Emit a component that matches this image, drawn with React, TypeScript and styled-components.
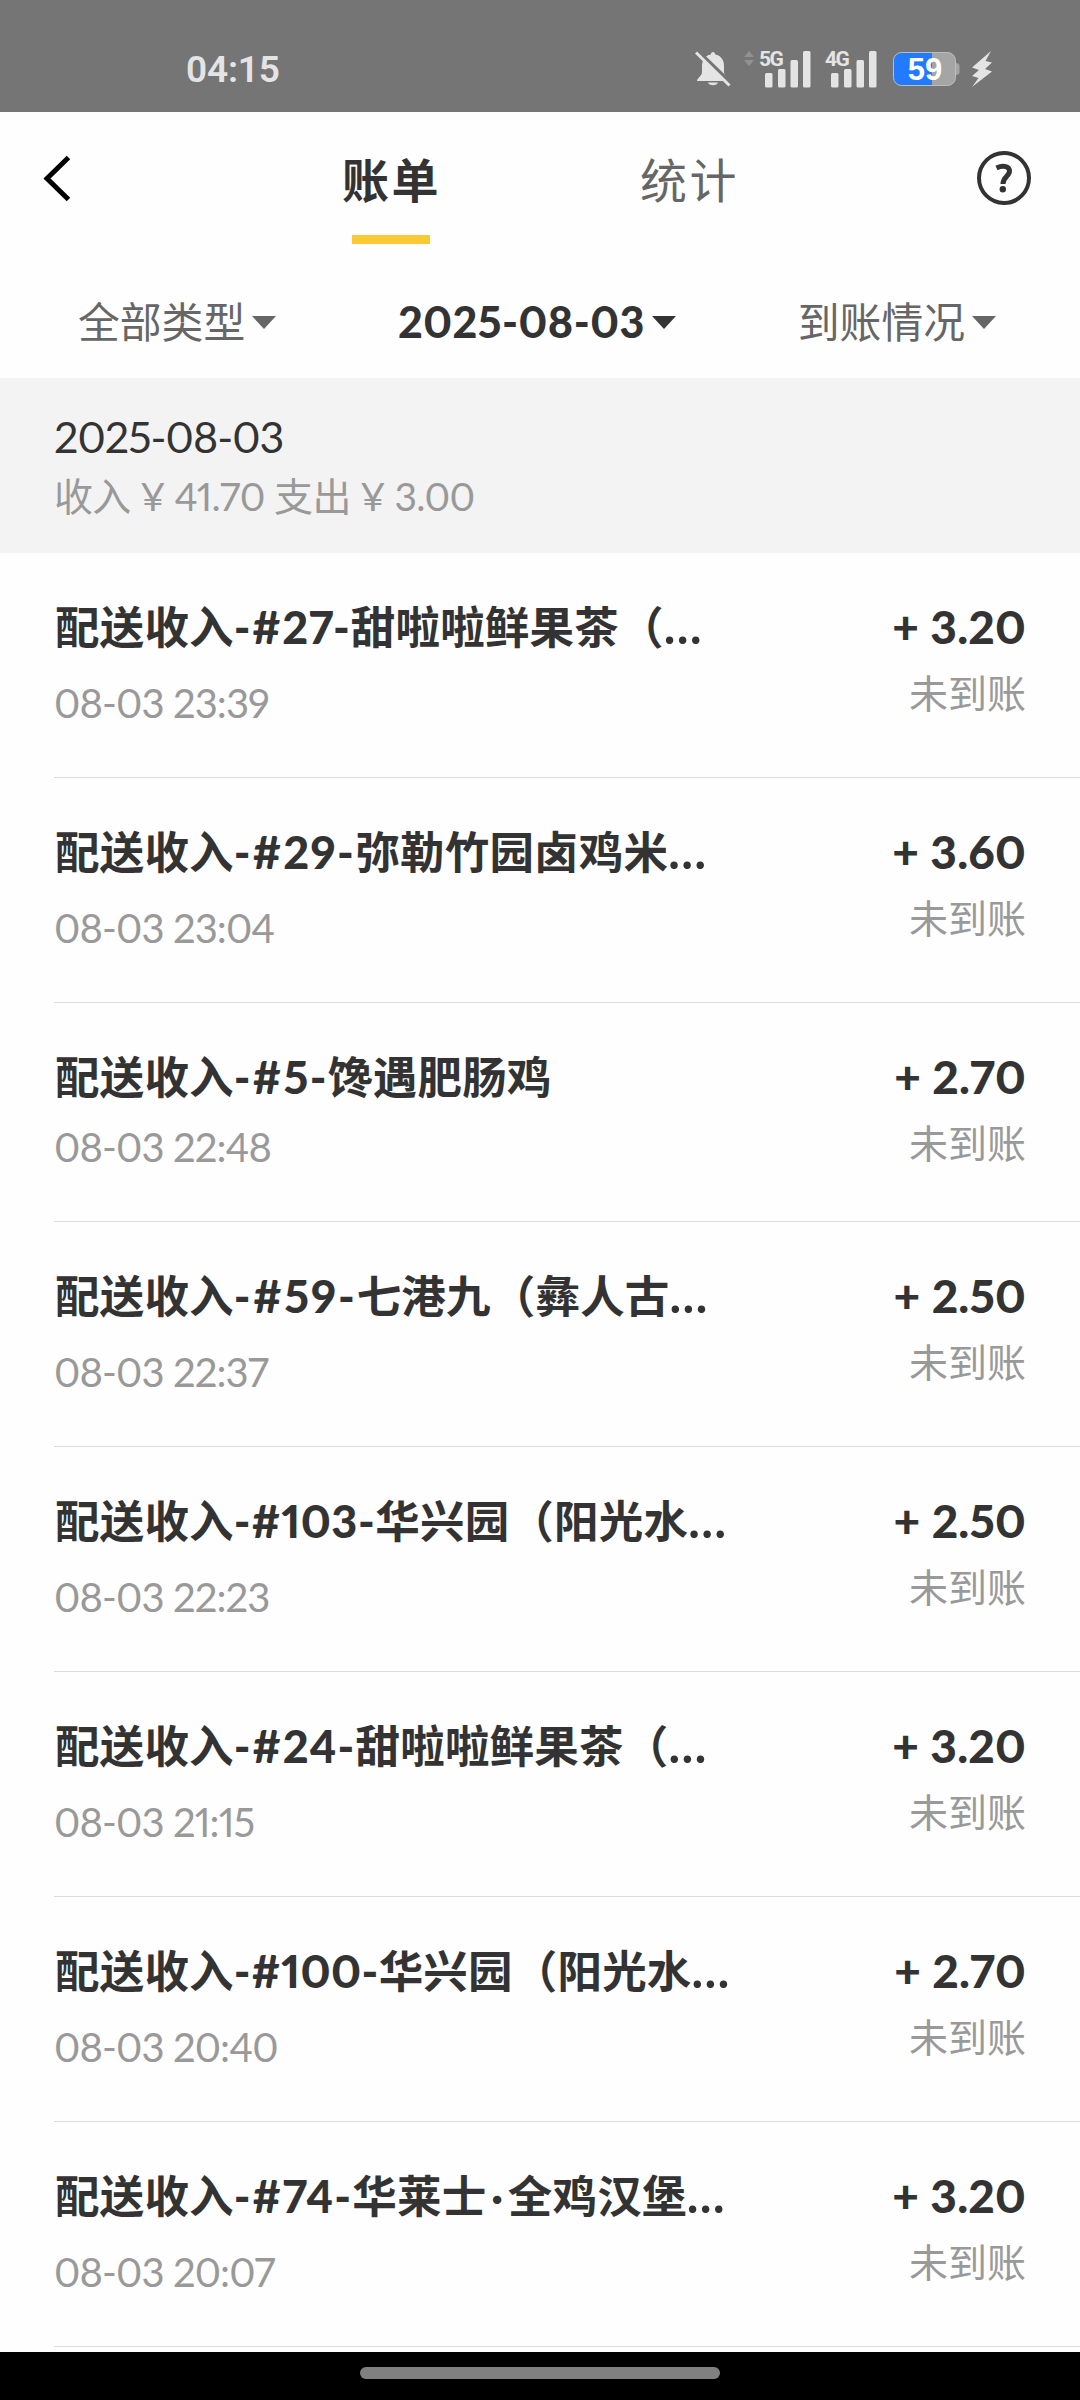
import React from "react";
import styled, { createGlobalStyle } from "styled-components";

const GlobalStyle = createGlobalStyle`
  * { box-sizing: border-box; }
  body { margin: 0; background: #fff; }
`;

const Screen = styled.div`
  width: 1080px;
  height: 2400px;
  display: flex;
  flex-direction: column;
  overflow: hidden;
  background: #fefefe;
  color: #333;
  font-family: Lato, "Noto Sans CJK SC", sans-serif;
  font-feature-settings: "pnum";
  white-space: pre;
`;

const StatusBar = styled.header`
  flex: none;
  height: 112px;
  padding: 26px 87px 0 186px;
  display: flex;
  justify-content: space-between;
  align-items: center;
  background: #757575;
  color: #e4e4e4;
`;

const Clock = styled.span`
  padding-top: 2px;
  font: 600 37px/48px Roboto, sans-serif;
  letter-spacing: -0.2px;
`;

const StatusIcons = styled.div`
  display: flex;
  align-items: center;
  height: 38px;
`;

const Icon = styled.svg<{ $left?: number }>`
  display: block;
  flex: none;
  margin-left: ${(p) => p.$left ?? 0}px;
`;

const SignalBox = styled.div<{ $left: number }>`
  position: relative;
  width: 52px;
  height: 38px;
  margin-left: ${(p) => p.$left}px;
`;

const Network = styled.span`
  position: absolute;
  left: 0;
  top: -1px;
  font: 700 21px/20px Roboto, sans-serif;
  letter-spacing: -1.5px;
`;

const Battery = styled.div`
  position: relative;
  width: 67px;
  height: 34px;
  margin-left: 16px;
`;

const BatteryLevel = styled.span`
  position: absolute;
  left: 0;
  top: 0;
  width: 64px;
  text-align: center;
  color: #fff;
  font: 700 31px/36px "Liberation Sans", sans-serif;
`;

const NavBar = styled.nav`
  flex: none;
  height: 138px;
  padding: 0 48px 0 42px;
  display: grid;
  grid-template-columns: 200px 298px 298px 194px;
`;

const IconButton = styled.button<{ $end?: boolean }>`
  display: flex;
  justify-content: ${(p) => (p.$end ? "flex-end" : "flex-start")};
  align-items: flex-start;
  padding: 38px 0 0;
  border: 0;
  background: none;
`;

const Tab = styled.div<{ $active?: boolean }>`
  display: flex;
  flex-direction: column;
  align-items: center;
  padding-top: 36px;
  font-size: 47px;
  line-height: 64px;
  color: ${(p) => (p.$active ? "#333" : "#666")};
  font-weight: ${(p) => (p.$active ? 700 : 400)};

  &::after {
    content: "";
    width: 78px;
    height: 9px;
    margin-top: 23px;
    background: ${(p) => (p.$active ? "#fbc933" : "transparent")};
  }
`;

const TabLabel = styled.span`
  padding-left: 1px;
  letter-spacing: 2.5px;
`;

const Filters = styled.div`
  flex: none;
  height: 128px;
  padding: 16px 84px 0 78px;
  display: flex;
  justify-content: space-between;
  align-items: center;
`;

const Filter = styled.div<{ $active?: boolean }>`
  display: flex;
  align-items: center;
  gap: 7px;
  color: ${(p) => (p.$active ? "#333" : "#666")};
  font-size: ${(p) => (p.$active ? 43 : 41.8)}px;
  font-weight: ${(p) => (p.$active ? 900 : 400)};
  letter-spacing: ${(p) => (p.$active ? 0.5 : 0)}px;
  line-height: 56px;
`;

const Summary = styled.section`
  flex: none;
  height: 175px;
  padding: 29px 54px 0;
  background: #f3f3f3;
`;

const SummaryDate = styled.div`
  font-size: 43px;
  line-height: 60px;
  letter-spacing: -0.95px;
`;

const SummaryTotals = styled.div`
  font-size: 39px;
  line-height: 58px;
  letter-spacing: -0.65px;
  color: #999;
`;

const List = styled.ul`
  flex: 1;
  min-height: 0;
  margin: 0;
  padding: 0 0 0 54px;
  overflow: hidden;
  list-style: none;
`;

const Row = styled.li<{ $compact?: boolean }>`
  height: ${(p) => (p.$compact ? 219 : 225)}px;
  padding: 44px 54px 0 0;
  display: flex;
  justify-content: space-between;
  border-bottom: 1px solid #dcdcdc;
`;

const Details = styled.div<{ $compact?: boolean }>`
  display: flex;
  flex-direction: column;
  gap: ${(p) => (p.$compact ? 14 : 20)}px;
`;

const Title = styled.div`
  height: 60px;
  padding-left: 1px;
  font-size: 44.5px;
  line-height: 60px;
  font-weight: 700;
  letter-spacing: 0.2px;
`;

const OrderNumber = styled.span<{ $tracking: number }>`
  font-size: 45px;
  font-weight: 900;
  letter-spacing: ${(p) => p.$tracking}px;
`;

const MiddleDot = styled.span`
  padding: 0 4.5px;
`;

const Ellipsis = styled.span`
  font-size: 49px;
  line-height: 40px;
  letter-spacing: 0;
`;

const Time = styled.div`
  font-size: 40px;
  line-height: 52px;
  letter-spacing: -0.9px;
  color: #999;
`;

const Result = styled.div`
  display: flex;
  flex-direction: column;
  align-items: flex-end;
  gap: 8px;
`;

const Amount = styled.div`
  font-size: 46px;
  line-height: 60px;
  font-weight: 900;
  letter-spacing: 0.2px;
`;

const State = styled.div`
  font-size: 39px;
  line-height: 56px;
  color: #999;
`;

const HomeArea = styled.footer`
  flex: none;
  height: 48px;
  padding-top: 15px;
  display: flex;
  justify-content: center;
  background: #000;
`;

const HomeIndicator = styled.div`
  width: 360px;
  height: 12px;
  border-radius: 6px;
  background: #808080;
`;

const Caret = () => (
  <Icon width="24" height="13" viewBox="0 0 24 13">
    <path d="M0 0H24L12 13Z" fill="currentColor" />
  </Icon>
);

const Signal = ({ label, left }: { label: string; left: number }) => (
  <SignalBox $left={left}>
    <Network>{label}</Network>
    <Icon width="52" height="38" viewBox="0 0 52 38" fill="currentColor">
      <rect x="6" y="23" width="7.5" height="14.5" rx="1.5" />
      <rect x="19" y="19" width="7.5" height="18.5" rx="1.5" />
      <rect x="31.5" y="10" width="7.5" height="27.5" rx="1.5" />
      <rect x="44" y="1" width="7.5" height="36.5" rx="1.5" />
    </Icon>
  </SignalBox>
);

type Entry = {
  order: string;
  tracking: number;
  shop: string;
  truncated?: boolean;
  time: string;
  amount: string;
};

const entries: Entry[] = [
  { order: "27", tracking: 0.9, shop: "甜啦啦鲜果茶（", truncated: true, time: "08-03 23:39", amount: "3.20" },
  { order: "29", tracking: 1.4, shop: "弥勒竹园卤鸡米", truncated: true, time: "08-03 23:04", amount: "3.60" },
  { order: "5", tracking: 1.5, shop: "馋遇肥肠鸡", time: "08-03 22:48", amount: "2.70" },
  { order: "59", tracking: 1.9, shop: "七港九（彝人古", truncated: true, time: "08-03 22:37", amount: "2.50" },
  { order: "103", tracking: 0.5, shop: "华兴园（阳光水", truncated: true, time: "08-03 22:23", amount: "2.50" },
  { order: "24", tracking: 1.1, shop: "甜啦啦鲜果茶（", truncated: true, time: "08-03 21:15", amount: "3.20" },
  { order: "100", tracking: 0.4, shop: "华兴园（阳光水", truncated: true, time: "08-03 20:40", amount: "2.70" },
  { order: "74", tracking: 1.1, shop: "华莱士·全鸡汉堡", truncated: true, time: "08-03 20:07", amount: "3.20" },
];

const ShopName = ({ name }: { name: string }) => {
  const [brand, rest] = name.split("·");
  return rest ? (
    <>
      {brand}
      <MiddleDot>·</MiddleDot>
      {rest}
    </>
  ) : (
    <>{brand}</>
  );
};

const BillRow = ({ entry }: { entry: Entry }) => {
  const compact = !entry.truncated;
  return (
    <Row $compact={compact}>
      <Details $compact={compact}>
        <Title>
          配送收入<OrderNumber $tracking={entry.tracking}>-#{entry.order}-</OrderNumber>
          <ShopName name={entry.shop} />
          {entry.truncated && <Ellipsis>…</Ellipsis>}
        </Title>
        <Time>{entry.time}</Time>
      </Details>
      <Result>
        <Amount>+ {entry.amount}</Amount>
        <State>未到账</State>
      </Result>
    </Row>
  );
};

export default function App() {
  return (
    <Screen>
      <GlobalStyle />
      <StatusBar>
        <Clock>04:15</Clock>
        <StatusIcons>
          <Icon width="36" height="36" viewBox="0 0 36 36">
            <path
              d="M18 1C19.5 1 20 2 20 3.2C26 4.5 29 9 29 15V21C29 25 34 27 34 30H2C2 27 7 25 7 21V15C7 9 10 4.5 16 3.2C16 2 16.5 1 18 1ZM13 31.5H23C22 35 14 35 13 31.5Z"
              fill="currentColor"
            />
            <path d="M3 0L36 32" stroke="#757575" strokeWidth="3.5" />
            <path d="M1 1.5L34.5 34.5" stroke="currentColor" strokeWidth="3" />
          </Icon>
          <Icon $left={13} width="10" height="38" viewBox="0 0 10 38" fill="#929292">
            <path d="M0 7L5 1L10 7ZM0 10H10L5 16Z" />
          </Icon>
          <Signal label="5G" left={5} />
          <Signal label="4G" left={14} />
          <Battery>
            <Icon width="67" height="34" viewBox="0 0 67 34">
              <rect x="0.5" y="0.5" width="62" height="33" rx="8" fill="#a5a5a5" />
              <path d="M8.5 .5H39V33.5H8.5A8 8 0 0 1 .5 25.5V8.5A8 8 0 0 1 8.5 .5Z" fill="#217aff" />
              <rect x="0.5" y="0.5" width="62" height="33" rx="8" fill="none" stroke="#bdbdbd" />
              <path d="M63 11C65 11 66.5 12 66.5 14V20C66.5 22 65 23 63 23Z" fill="#a5a5a5" />
            </Icon>
            <BatteryLevel>59</BatteryLevel>
          </Battery>
          <Icon $left={11} width="22" height="36" viewBox="0 0 22 36">
            <path d="M20 0L1 16.5L8 19L1 25L7.5 27L1 36L21 20.5L14 18L21 11.5L14.5 10Z" fill="currentColor" />
          </Icon>
        </StatusIcons>
      </StatusBar>
      <NavBar>
        <IconButton aria-label="back">
          <Icon width="30" height="56" viewBox="0 0 30 56">
            <path d="M26.5 7.5L5 28.5L26.5 49.5" fill="none" stroke="#000" strokeWidth="5" />
          </Icon>
        </IconButton>
        <Tab $active>
          <TabLabel>账单</TabLabel>
        </Tab>
        <Tab>
          <TabLabel>统计</TabLabel>
        </Tab>
        <IconButton aria-label="help" $end>
          <Icon width="56" height="56" viewBox="0 0 56 56" fill="none" stroke="#333">
            <circle cx="28" cy="28" r="25" strokeWidth="4" />
            <path d="M20.5 18C28 14.5 33.5 17 33.5 21C33.5 26 27 27 27 34" strokeWidth="5" />
            <circle cx="26.8" cy="39.2" r="3.2" fill="#333" stroke="none" />
          </Icon>
        </IconButton>
      </NavBar>
      <Filters>
        <Filter>全部类型<Caret /></Filter>
        <Filter $active>2025-08-03<Caret /></Filter>
        <Filter>到账情况<Caret /></Filter>
      </Filters>
      <Summary>
        <SummaryDate>2025-08-03</SummaryDate>
        <SummaryTotals>收入 ¥ 41.70 支出 ¥ 3.00</SummaryTotals>
      </Summary>
      <List>
        {entries.map((entry) => (
          <BillRow key={entry.time} entry={entry} />
        ))}
      </List>
      <HomeArea>
        <HomeIndicator />
      </HomeArea>
    </Screen>
  );
}
